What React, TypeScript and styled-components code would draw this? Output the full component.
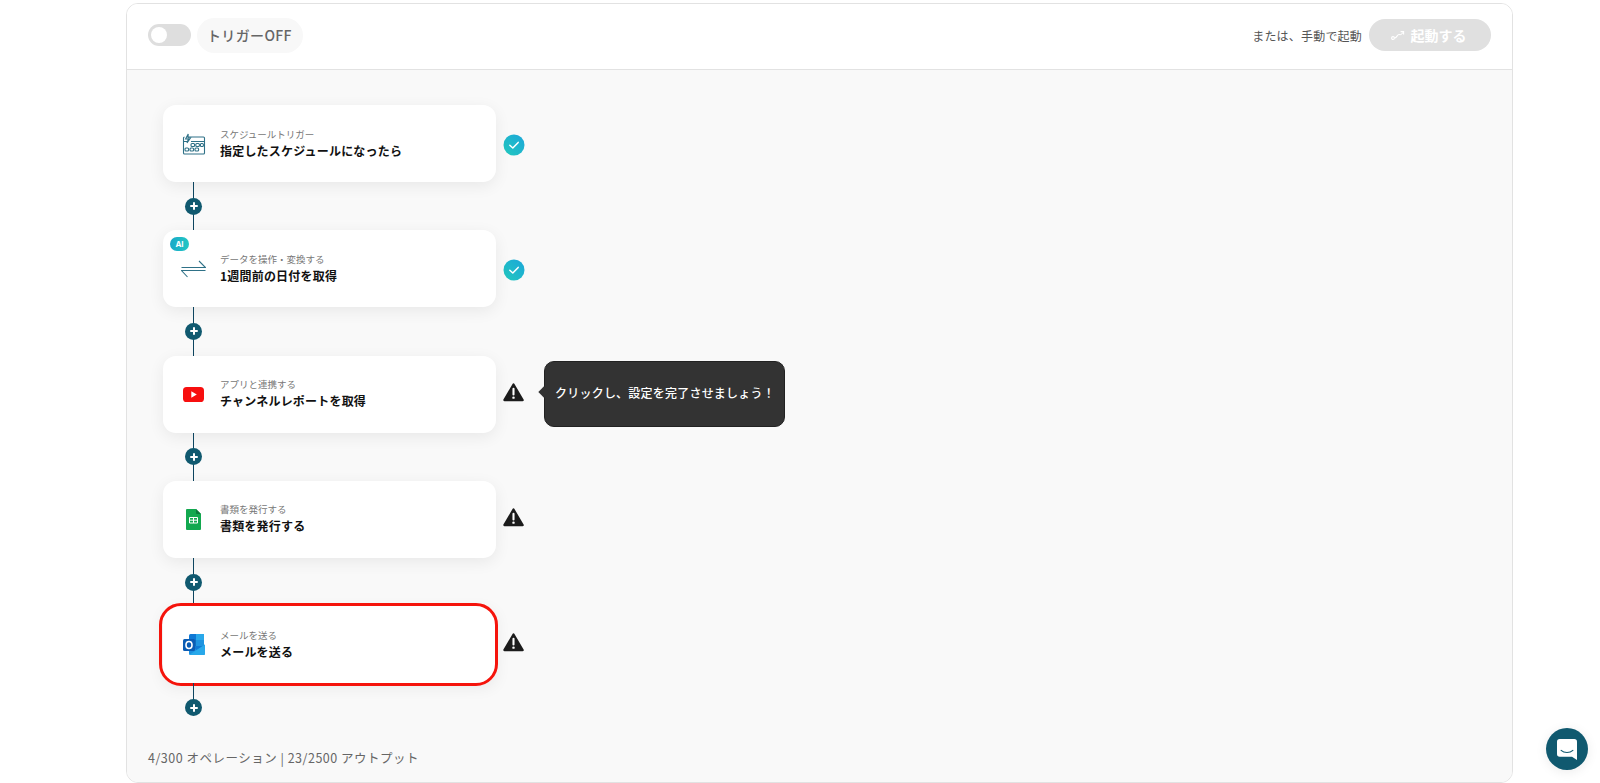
import { ReactNode } from "react";
import styled, { createGlobalStyle } from "styled-components";

const GlobalStyle = createGlobalStyle`
  html, body {
    margin: 0;
    height: 100%;
    background: #fff;
    overflow: hidden;
    font-family: "Noto Sans CJK JP", "Noto Sans", sans-serif;
  }
  * { box-sizing: border-box; }
`;

const Page = styled.div`
  width: 1600px;
  height: 783px;
  padding: 3px 87px 0 126px;
`;

const Panel = styled.div`
  height: 100%;
  display: flex;
  flex-direction: column;
  border: 1px solid #e2e2e2;
  border-radius: 12px;
  overflow: hidden;
`;

const Header = styled.header`
  height: 66px;
  flex: none;
  display: flex;
  align-items: center;
  padding: 0 21px 3px 21px;
  background: #fff;
  border-bottom: 1px solid #e2e2e2;
`;

const Toggle = styled.div`
  width: 43px;
  height: 22px;
  border-radius: 11px;
  background: #dedede;
  padding: 3px;
`;

const ToggleKnob = styled.div`
  width: 16px;
  height: 16px;
  border-radius: 50%;
  background: #fff;
`;

const TriggerPill = styled.div`
  margin-left: 6px;
  height: 35px;
  padding: 0 11px 0 10px;
  border-radius: 18px;
  background: #f8f8f8;
  display: flex;
  align-items: center;
  font-size: 14px;
  font-weight: 500;
  letter-spacing: 0.35px;
  color: #666;
`;

const HeaderRight = styled.div`
  margin-left: auto;
  display: flex;
  align-items: center;
  gap: 7px;
`;

const ManualText = styled.span`
  font-size: 12px;
  letter-spacing: 0.2px;
  color: #555;
`;

const RunButton = styled.div`
  width: 122px;
  height: 32px;
  border-radius: 16px;
  background: #e0e0e0;
  color: #fff;
  display: flex;
  align-items: center;
  justify-content: center;
  gap: 6px;
  padding-right: 3px;
  font-size: 14px;
  font-weight: 700;
`;

const Canvas = styled.main`
  flex: 1;
  min-height: 0;
  display: flex;
  flex-direction: column;
  align-items: flex-start;
  background: #f9f9f9;
  padding: 35px 0 15px 36px;
`;

const StepRow = styled.div`
  position: relative;
  display: flex;
  align-items: center;
`;

const Card = styled.div<{ $active?: boolean }>`
  position: relative;
  width: 333px;
  height: 77px;
  border-radius: 13px;
  background: #fff;
  box-shadow: 0 4px 16px rgba(0, 0, 0, 0.07);
  display: flex;
  align-items: center;
  padding-left: 17px;
  &::after {
    content: "";
    display: ${(props) => (props.$active ? "block" : "none")};
    position: absolute;
    inset: -3px -2px -3px -4px;
    border: 3px solid #f5140c;
    border-radius: 22px;
  }
`;

const IconSlot = styled.div`
  width: 27px;
  height: 27px;
  flex: none;
  display: flex;
  align-items: center;
  justify-content: center;
`;

const CardText = styled.div`
  margin-left: 13px;
  display: flex;
  flex-direction: column;
  margin-top: -1px;
`;

const SubLabel = styled.span`
  font-size: 9.5px;
  line-height: 15px;
  color: #777;
`;

const CardTitle = styled.span`
  font-size: 12px;
  line-height: 18px;
  font-weight: 700;
  letter-spacing: 0.2px;
  color: #111;
`;

const AiBadge = styled.span`
  position: absolute;
  left: 7px;
  top: 7px;
  width: 19px;
  height: 14px;
  border-radius: 7px;
  background: linear-gradient(90deg, #1aa8c8, #22c7c4);
  color: #fff;
  font-size: 8px;
  font-weight: 700;
  display: flex;
  align-items: center;
  justify-content: center;
  font-family: "Inter", sans-serif;
`;

const StatusSlot = styled.div<{ $done: boolean }>`
  width: 22px;
  height: 22px;
  margin-left: ${(props) => (props.$done ? "7px" : "6px")};
  margin-top: ${(props) => (props.$done ? "2px" : "-4px")};
  display: flex;
  align-items: center;
  justify-content: center;
`;

const Connector = styled.div<{ $last?: boolean }>`
  width: 61px;
  height: ${(props) => (props.$last ? "33px" : "48.33px")};
  position: relative;
  display: flex;
  justify-content: center;
  align-items: ${(props) => (props.$last ? "flex-end" : "center")};
  &::before {
    content: "";
    position: absolute;
    left: 30px;
    top: 0;
    bottom: ${(props) => (props.$last ? "8px" : "0")};
    width: 1px;
    background: #0d4560;
  }
`;

const PlusButton = styled.div`
  position: relative;
  width: 17px;
  height: 17px;
  border-radius: 50%;
  background: #10596f;
  display: flex;
  align-items: center;
  justify-content: center;
`;

const Tooltip = styled.div`
  position: absolute;
  left: 381px;
  top: 5px;
  width: 241px;
  height: 66px;
  border-radius: 10px;
  background: #333;
  border: 1px solid #222;
  color: #fff;
  font-size: 12px;
  font-weight: 500;
  letter-spacing: 0.22px;
  display: flex;
  align-items: center;
  padding: 0 0 2px 10px;
  &::before {
    content: "";
    position: absolute;
    left: -5px;
    top: 26px;
    width: 8px;
    height: 8px;
    background: #333;
    transform: rotate(45deg);
  }
`;

const Usage = styled.div`
  margin-top: auto;
  margin-left: -15px;
  font-size: 12.5px;
  color: #666;
  letter-spacing: 0.5px;
  white-space: nowrap;
`;

const ChatButton = styled.div`
  position: fixed;
  left: 1546px;
  top: 728px;
  width: 42px;
  height: 42px;
  border-radius: 50%;
  background: #10596f;
  display: flex;
  align-items: center;
  justify-content: center;
  box-shadow: 0 2px 12px rgba(0, 0, 0, 0.08);
`;

const ScheduleIcon = () => (
  <svg width="24" height="24" viewBox="0 0 24 24" fill="none" stroke="#2f7187" strokeWidth="1.1">
    <path d="M6 5H21.5a1 1 0 0 1 1 1V21a1 1 0 0 1-1 1H2.5a1 1 0 0 1-1-1V6a1 1 0 0 1 1-1" />
    <path d="M1.5 9.5H5M9 9.5H22.5" />
    <path d="M6.2 2 3.6 7H6.4L5 11 8.6 5.8H6Z" fill="#fff" />
    <rect x="9" y="11.5" width="3.6" height="3" rx="1" />
    <rect x="13.8" y="11.5" width="3.6" height="3" rx="1" />
    <rect x="18.4" y="11.5" width="3" height="3" rx="1" />
    <rect x="3" y="16" width="3.6" height="3" rx="1" />
    <rect x="8" y="16" width="3.6" height="3" rx="1" />
    <rect x="13" y="16" width="3.6" height="3" rx="1" />
  </svg>
);

const ConvertIcon = () => (
  <svg width="25" height="18" viewBox="0 0 25 18" fill="none" stroke="#2f7187" strokeWidth="1.1">
    <path d="M0.5 7.5H24.5L18 1" />
    <path d="M24.5 10.5H0.5L6.5 17" />
  </svg>
);

const YoutubeIcon = () => (
  <svg width="21" height="15" viewBox="0 0 21 15">
    <rect width="21" height="15" rx="3.6" fill="#f70f0f" />
    <path d="M8.3 4.2 13.8 7.5 8.3 10.8Z" fill="#fff" />
  </svg>
);

const SheetsIcon = () => (
  <svg width="15" height="21" viewBox="0 0 15 21">
    <path d="M1 0H10L15 5V20a1 1 0 0 1-1 1H1a1 1 0 0 1-1-1V1a1 1 0 0 1 1-1Z" fill="#12a84f" />
    <path d="M10 0 15 5H11a1 1 0 0 1-1-1Z" fill="#0a7a3a" />
    <path d="M3.5 8.5H11.5V14H3.5ZM7.5 8.5V14M3.5 11.2H11.5" fill="none" stroke="#fff" strokeWidth="1" />
  </svg>
);

const OutlookIcon = () => (
  <svg width="22" height="21" viewBox="0 0 22 21">
    <rect x="6" y="0" width="15" height="19" rx="1.5" fill="#0f78d4" />
    <rect x="13" y="0" width="8" height="6" fill="#29a8ea" />
    <rect x="6" y="6" width="7" height="6" fill="#0f6cbd" />
    <rect x="13" y="6" width="8" height="6" fill="#1e93e0" />
    <path d="M6 11 14 16 22 10.5V19.5a1.5 1.5 0 0 1-1.5 1.5H7.5A1.5 1.5 0 0 1 6 19.5Z" fill="#1b8fdf" />
    <path d="M6 21 22 10.5V19.5a1.5 1.5 0 0 1-1.5 1.5Z" fill="#28a8ea" />
    <rect x="0" y="5" width="12" height="12" rx="1.5" fill="#0a5cb4" />
    <ellipse cx="6" cy="11" rx="3" ry="3.5" fill="none" stroke="#fff" strokeWidth="1.6" />
  </svg>
);

const CheckStatus = () => (
  <svg width="22" height="22" viewBox="0 0 22 22">
    <defs>
      <linearGradient id="checkFill" x1="0" y1="1" x2="1" y2="0">
        <stop offset="0" stopColor="#22c9bd" />
        <stop offset="1" stopColor="#1ca6da" />
      </linearGradient>
    </defs>
    <circle cx="11" cy="11" r="10.5" fill="url(#checkFill)" />
    <path d="M6.8 11.2 9.8 14 15.2 8.4" fill="none" stroke="#fff" strokeWidth="1.5" strokeLinecap="round" strokeLinejoin="round" />
  </svg>
);

const WarnStatus = () => (
  <svg width="21" height="19" viewBox="0 0 22 20">
    <path d="M11 1.6 20.6 18H1.4Z" fill="#1c1c1c" stroke="#1c1c1c" strokeWidth="2.4" strokeLinejoin="round" />
    <path d="M11 6.2V12" stroke="#fff" strokeWidth="2.2" strokeLinecap="round" />
    <circle cx="11" cy="15.4" r="1.3" fill="#fff" />
  </svg>
);

const PlusGlyph = () => (
  <svg width="8" height="8" viewBox="0 0 8 8">
    <path d="M4 1V7M1 4H7" stroke="#fff" strokeWidth="2" strokeLinecap="round" />
  </svg>
);

const RunGlyph = () => (
  <svg width="14" height="10" viewBox="0 0 14 10" fill="none" stroke="#fff" strokeWidth="1.1">
    <circle cx="2" cy="8" r="1.4" />
    <path d="M3.4 8C6 8 6 4.5 8 4.5S9.5 5.8 12 2.5" />
    <path d="M9.6 1.6 12.6 1.6 12.6 4.4" />
  </svg>
);

const ChatGlyph = () => (
  <svg width="20" height="21" viewBox="0 0 22 23">
    <path d="M3 0H19a3 3 0 0 1 3 3V23L16.5 19.5H3a3 3 0 0 1-3-3V3a3 3 0 0 1 3-3Z" fill="#fff" />
    <path d="M4.5 12.5C8 15.5 14 15.5 17.5 12.5" fill="none" stroke="#10596f" strokeWidth="1.2" strokeLinecap="round" />
  </svg>
);

type Step = {
  icon: ReactNode;
  sub: string;
  title: string;
  done: boolean;
  ai?: boolean;
  active?: boolean;
  hint?: string;
};

const steps: Step[] = [
  { icon: <ScheduleIcon />, sub: "スケジュールトリガー", title: "指定したスケジュールになったら", done: true },
  { icon: <ConvertIcon />, sub: "データを操作・変換する", title: "1週間前の日付を取得", done: true, ai: true },
  {
    icon: <YoutubeIcon />,
    sub: "アプリと連携する",
    title: "チャンネルレポートを取得",
    done: false,
    hint: "クリックし、設定を完了させましょう！",
  },
  { icon: <SheetsIcon />, sub: "書類を発行する", title: "書類を発行する", done: false },
  { icon: <OutlookIcon />, sub: "メールを送る", title: "メールを送る", done: false, active: true },
];

const App = () => {
  return (
    <>
      <GlobalStyle />
      <Page>
        <Panel>
          <Header>
            <Toggle>
              <ToggleKnob />
            </Toggle>
            <TriggerPill>トリガーOFF</TriggerPill>
            <HeaderRight>
              <ManualText>または、手動で起動</ManualText>
              <RunButton>
                <RunGlyph />
                起動する
              </RunButton>
            </HeaderRight>
          </Header>
          <Canvas>
            {steps.map((step, i) => (
              <div key={step.sub}>
                <StepRow>
                  <Card $active={step.active}>
                    {step.ai && <AiBadge>AI</AiBadge>}
                    <IconSlot>{step.icon}</IconSlot>
                    <CardText>
                      <SubLabel>{step.sub}</SubLabel>
                      <CardTitle>{step.title}</CardTitle>
                    </CardText>
                  </Card>
                  <StatusSlot $done={step.done}>{step.done ? <CheckStatus /> : <WarnStatus />}</StatusSlot>
                  {step.hint && <Tooltip>{step.hint}</Tooltip>}
                </StepRow>
                <Connector $last={i === steps.length - 1}>
                  <PlusButton>
                    <PlusGlyph />
                  </PlusButton>
                </Connector>
              </div>
            ))}
            <Usage>4/300 オペレーション | 23/2500 アウトプット</Usage>
          </Canvas>
        </Panel>
        <ChatButton>
          <ChatGlyph />
        </ChatButton>
      </Page>
    </>
  );
};

export default App;
